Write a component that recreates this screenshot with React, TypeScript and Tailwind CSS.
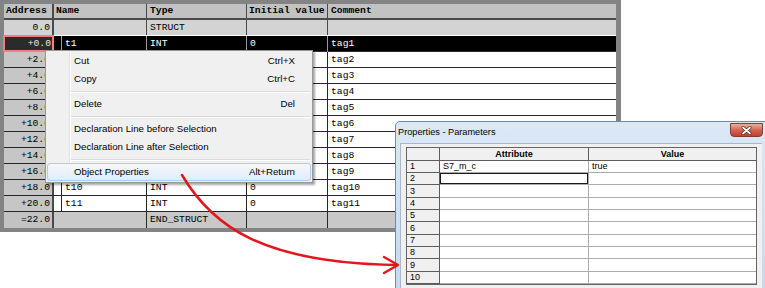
import React from "react";

const data = Array.from({ length: 11 }, (_, i) => ({
  addr: `+${i * 2}.0`,
  name: `t${i + 1}`,
  comment: `tag${i + 1}`,
}));

function MainTable() {
  return (
    <div className="w-[621px] border-l-4 border-t-4 border-r-[5px] border-b-4 border-[#838383] font-['Liberation_Mono',monospace] text-[9.7px] leading-none text-black">
      <div className="grid grid-cols-[50px_93px_100px_81px_288px] h-[16px] bg-[#c2c2c2] border-b-2 border-[#4a4a4a] font-bold">
        <div className="flex items-center pl-[2px] border-r-2 border-[#4a4a4a]">Address</div>
        <div className="flex items-center pl-[2px] border-r border-[#4a4a4a]">Name</div>
        <div className="flex items-center pl-[3px] border-r border-[#4a4a4a]">Type</div>
        <div className="flex items-center pl-[2px] border-r border-[#4a4a4a]">Initial value</div>
        <div className="flex items-center pl-[3px]">Comment</div>
      </div>
      <div className="grid grid-cols-[50px_93px_100px_81px_288px] h-[16px] bg-[#d3d3d3] border-b border-white">
        <div className="flex items-center justify-end pr-[2px] border-r-2 border-[#4a4a4a]">0.0</div>
        <div className="border-r border-[#4a4a4a]"></div>
        <div className="flex items-center pl-[3px] border-r border-[#4a4a4a]">STRUCT</div>
        <div className="border-r border-[#4a4a4a]"></div>
        <div></div>
      </div>
      {data.map((r, i) =>
        i === 0 ? (
          <div key={r.name} className="grid grid-cols-[50px_93px_100px_81px_288px] h-[16px] bg-black text-white border-b border-[#2a2a2a]">
            <div className="flex items-center justify-end pr-[1px] bg-[#2b2b2b] text-[#e6e6e6] border-2 border-[#f07e7e] -ml-[1px] -mt-[1px] h-[17px]">{r.addr}</div>
            <div className="flex border-r border-[#9a9a9a]">
              <div className="w-[8px] border-r border-[#9a9a9a]"></div>
              <div className="flex items-center pl-[3px]">{r.name}</div>
            </div>
            <div className="flex items-center pl-[3px] border-r border-[#9a9a9a]">INT</div>
            <div className="flex items-center pl-[3px] border-r border-[#9a9a9a]">0</div>
            <div className="flex items-center pl-[3px]">{r.comment}</div>
          </div>
        ) : (
          <div key={r.name} className="grid grid-cols-[50px_93px_100px_81px_288px] h-[16px] bg-white border-b border-[#262626]">
            <div className="flex items-center justify-end pr-[2px] bg-[#c6c6c6] border-r-2 border-[#4a4a4a]">{r.addr}</div>
            <div className="flex border-r border-[#262626]">
              <div className="w-[8px] border-r border-[#262626]"></div>
              <div className="flex items-center pl-[3px]">{r.name}</div>
            </div>
            <div className="flex items-center pl-[3px] border-r border-[#262626]">INT</div>
            <div className="flex items-center pl-[3px] border-r border-[#262626]">0</div>
            <div className="flex items-center pl-[3px]">{r.comment}</div>
          </div>
        )
      )}
      <div className="grid grid-cols-[50px_93px_100px_81px_288px] h-[16px] bg-[#c8c8c8]">
        <div className="flex items-center justify-end pr-[2px] bg-[#c2c2c2] border-r-2 border-[#4a4a4a]">=22.0</div>
        <div className="border-r border-[#262626]"></div>
        <div className="flex items-center pl-[3px] border-r border-[#262626]">END_STRUCT</div>
        <div className="border-r border-[#262626]"></div>
        <div></div>
      </div>
    </div>
  );
}

function MenuItem({ label, shortcut, active }: { label: string; shortcut?: string; active?: boolean }) {
  return (
    <div
      className={
        active
          ? "relative flex items-center justify-between h-[18px] pl-[26px] pr-[15px] border border-[#a9cdf5] rounded-[3px] bg-linear-to-b from-[#f3f8fe] to-[#e1ecfa]"
          : "relative flex items-center justify-between h-[18px] pl-[26px] pr-[15px] border border-transparent"
      }
    >
      <span>{label}</span>
      {shortcut ? <span>{shortcut}</span> : null}
    </div>
  );
}

function Sep() {
  return (
    <div className="h-[7px] flex flex-col justify-center pl-[23px] pr-[1px]">
      <div className="h-px bg-[#dadbdb]"></div>
      <div className="h-px bg-white"></div>
    </div>
  );
}

function ContextMenu() {
  return (
    <div className="absolute left-[45px] top-[50px] w-[268px] border border-[#979797] bg-[#f0f0f0] py-[1px] px-[1px] shadow-[2px_2px_2px_rgba(0,0,0,0.35)] font-['Liberation_Sans',Arial,sans-serif] text-[9.7px] leading-none text-black">
      <div className="absolute left-[23px] top-[1px] bottom-[1px] w-px bg-[#e0e1e1]"></div>
      <div className="absolute left-[24px] top-[1px] bottom-[1px] w-px bg-white"></div>
      <MenuItem label="Cut" shortcut="Ctrl+X" />
      <MenuItem label="Copy" shortcut="Ctrl+C" />
      <Sep />
      <MenuItem label="Delete" shortcut="Del" />
      <Sep />
      <MenuItem label="Declaration Line before Selection" />
      <MenuItem label="Declaration Line after Selection" />
      <Sep />
      <MenuItem label="Object Properties" shortcut="Alt+Return" active />
    </div>
  );
}

const rowHeights = ["h-[12px]", "h-[12px]", "h-[13px]", "h-[12px]", "h-[12px]", "h-[13px]", "h-[12px]", "h-[12px]", "h-[13px]", "h-[12px]"];

function Dialog() {
  return (
    <div className="absolute left-[395px] top-[121px] w-[374px] h-[172px] border border-[#7089a8] rounded-t-[5px] bg-linear-to-b from-[#dbe8f6] to-[#c6d9ee] font-['Liberation_Sans',Arial,sans-serif] text-black">
      <div className="h-[21px] flex items-center pl-[2px] text-[9.2px] leading-none">Properties - Parameters</div>
      <div className="absolute left-[334px] top-[1px] w-[33px] h-[14px] rounded-b-[4px] border border-[#8a3a30] bg-linear-to-b from-[#eab0a2] via-[#d26552] to-[#c2402e] flex items-center justify-center">
        <svg width="11" height="9" viewBox="0 0 11 9">
          <path d="M2 1.5 L9 7.5 M9 1.5 L2 7.5" stroke="#5a2018" strokeWidth="3" strokeLinecap="round" />
          <path d="M2 1.5 L9 7.5 M9 1.5 L2 7.5" stroke="#ffffff" strokeWidth="1.7" strokeLinecap="round" />
        </svg>
      </div>
      <div className="ml-[4px] mr-[6px] h-[160px] bg-[#f0f0f0] border-l border-t border-[#a8b8cc] pl-[5px] pt-[3px]">
        <div className="w-[351px] border border-[#646464] bg-white text-[9px] leading-none">
          <div className="grid grid-cols-[33px_149px_167px] h-[13px] bg-[#f0f0f0] font-bold border-b border-[#5c5c5c]">
            <div className="border-r border-[#5c5c5c]"></div>
            <div className="flex items-center justify-center border-r border-[#5c5c5c]">Attribute</div>
            <div className="flex items-center justify-center">Value</div>
          </div>
          {rowHeights.map((h, i) => (
            <div key={i} className={`grid grid-cols-[33px_149px_167px] ${h}`}>
              <div className="flex items-center pl-[3px] bg-[#f0f0f0] border-r border-b border-[#5c5c5c]">{i + 1}</div>
              <div className="border-r border-b border-[#acacac] flex">
                {i === 1 ? (
                  <div className="flex-1 border border-[#1a1a1a]"></div>
                ) : (
                  <div className="flex items-center pl-[3px]">{i === 0 ? "S7_m_c" : ""}</div>
                )}
              </div>
              <div className="border-b border-[#acacac] flex items-center pl-[3px]">{i === 0 ? "true" : ""}</div>
            </div>
          ))}
        </div>
      </div>
    </div>
  );
}

function Arrow() {
  return (
    <svg className="absolute left-0 top-0 pointer-events-none" width="765" height="288" viewBox="0 0 765 288">
      <path d="M182 175 C212 226 262 263 397 265" fill="none" stroke="#e3161e" strokeWidth="2.5" strokeLinecap="round" />
      <path d="M384 257 L398 265 L384 273" fill="none" stroke="#e3161e" strokeWidth="2.5" strokeLinecap="round" strokeLinejoin="round" />
    </svg>
  );
}

export default function App() {
  return (
    <div className="relative w-[765px] h-[288px] overflow-hidden bg-white">
      <MainTable />
      <ContextMenu />
      <Dialog />
      <Arrow />
    </div>
  );
}
